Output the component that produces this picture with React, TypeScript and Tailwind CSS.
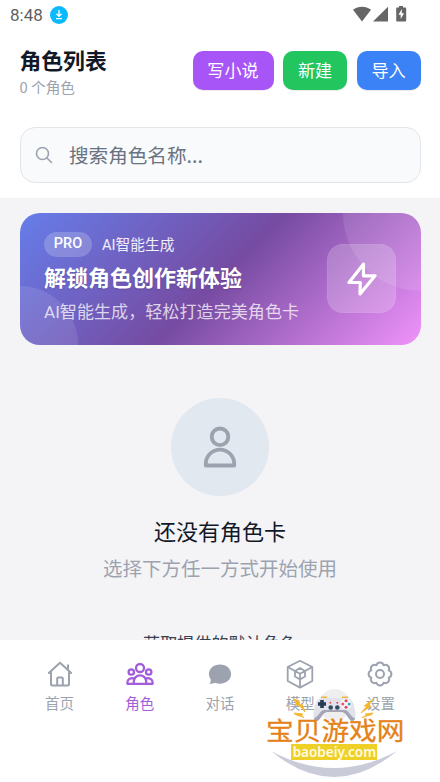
import type { ReactNode } from "react"

const actions = [
  { label: "写小说", className: "w-[81px] bg-[#a855f7]" },
  { label: "新建", className: "w-[64px] bg-[#22c55e]" },
  { label: "导入", className: "w-[64px] bg-[#3b82f6]" },
]

function StatusBar() {
  return (
    <div className="flex h-[30px] items-center pl-[10px] pr-[33px]">
      <span className="font-['Roboto'] text-[17px] leading-none text-[#5f5f5f]">8:48</span>
      <svg className="ml-[7px]" width="18" height="18" viewBox="0 0 18 18">
        <circle cx="9" cy="9" r="9" fill="#0abafc" />
        <path d="M9 4v6M6.500 7.800 9 10.300l2.500-2.500M6 12.700h6" fill="none" stroke="#fff" strokeWidth="1.3" />
      </svg>
      <svg className="ml-auto" width="54" height="18" viewBox="0 0 54 18" fill="#666">
        <path d="M0 3.800C5-.2 13-.2 18 3.800L9 15.500z" />
        <path d="M35 .8v14.700H20z" />
        <path d="M46 1.600V0h4v1.600h2c.8 0 1.200.4 1.200 1.200v11.500c0 .8-.4 1.200-1.200 1.200h-7.600c-.8 0-1.200-.4-1.200-1.200V2.800c0-.8.4-1.200 1.200-1.200z" />
        <path d="m48.800 3-3.300 5.800h2.200v4.200l3.300-5.800h-2.200z" fill="#fff" />
      </svg>
    </div>
  )
}

function Header() {
  return (
    <header className="h-[198px] bg-white">
      <StatusBar />
      <div className="flex h-[97px] items-start justify-between px-[19.500px]">
        <div className="pt-[14px]">
          <h1 className="text-[21.800px] font-bold leading-[32px] text-[#111827]">角色列表</h1>
          <p className="text-[14.700px] leading-[22px] text-[#9ca3af]">0 个角色</p>
        </div>
        <div className="flex gap-[9.500px] pt-[21px]">
          {actions.map((a) => (
            <button
              key={a.label}
              className={`h-[39px] rounded-[10px] pb-[2px] text-[17.100px] text-white shadow-[0_1px_1px_rgba(0,0,0,0.08)] ${a.className}`}
            >
              {a.label}
            </button>
          ))}
        </div>
      </div>
      <div className="mx-[19.500px] flex h-[56px] items-center rounded-[15px] border border-[#e2e5e9] bg-[#f8fafc] pl-[14.500px]">
        <svg width="18" height="18" viewBox="0 0 18 18" fill="none" stroke="#9ca3af" strokeWidth="1.6" strokeLinecap="round">
          <circle cx="7.500" cy="7.500" r="6" />
          <path d="m12 12 4.500 4.500" />
        </svg>
        <span className="ml-[16px] pb-[1px] text-[19.600px] text-[#6b7280]">搜索角色名称...</span>
      </div>
    </header>
  )
}

function ProBanner() {
  return (
    <section className="relative mx-[19.500px] mt-[14.500px] h-[132px] overflow-hidden rounded-[20px] bg-[linear-gradient(135deg,#667eea_0%,#764ba2_50%,#f093fb_100%)]">
      <div className="absolute -right-[78px] -top-[78px] size-[156px] rounded-full bg-white/10" />
      <div className="absolute -bottom-[58.500px] -left-[58.500px] size-[117px] rounded-full bg-white/10" />
      <div className="relative flex h-full items-center justify-between pl-[24.500px] pr-[24.500px]">
        <div className="text-white">
          <div className="flex items-center gap-[10px]">
            <span className="flex h-[25px] w-[48px] items-center justify-center rounded-full bg-white/20 font-['Roboto'] text-[14.500px] font-medium">
              PRO
            </span>
            <span className="text-[14.700px] leading-[25px] text-white/90">
              <span className="font-['Roboto']">AI</span>智能生成
            </span>
          </div>
          <h2 className="mt-[2px] text-[22px] font-bold leading-[32px] [text-shadow:0_1px_2px_rgba(0,0,0,0.15)]">
            解锁角色创作新体验
          </h2>
          <p className="mb-[2px] mt-[6px] text-[17.100px] leading-[25px] text-white/75">
            <span className="font-['Roboto']">AI</span>智能生成，轻松打造完美角色卡
          </p>
        </div>
        <div className="flex size-[69px] shrink-0 items-center justify-center rounded-[16px] border border-white/5 bg-white/20">
          <svg width="30" height="34" viewBox="0 0 30 34" fill="none" stroke="#fff" strokeWidth="3.200" strokeLinejoin="round">
            <path d="M16.500 2 2 20.500h11.300L13 32 28 13.800H16.500z" />
          </svg>
        </div>
      </div>
    </section>
  )
}

function EmptyState() {
  return (
    <section className="flex flex-col items-center pt-[53.500px]">
      <div className="flex size-[98px] items-center justify-center rounded-full bg-[#e2e8f0]">
        <svg width="34" height="42" viewBox="0 0 34 42" fill="none" stroke="#9ca3af" strokeWidth="3.800" strokeLinejoin="round">
          <circle cx="17" cy="10.800" r="8.300" />
          <path d="M2.800 39.500v-1.700a14.200 14.200 0 0 1 28.400 0v1.700z" />
        </svg>
      </div>
      <h3 className="mt-[17px] text-[22px] leading-[34px] text-[#111827]">还没有角色卡</h3>
      <p className="mt-[6px] text-[19.500px] leading-[29px] text-[#9ca3af]">选择下方任一方式开始使用</p>
      <p className="mt-[48px] text-[17.100px] leading-[25px] text-[#374151]">获取提供的默认角色</p>
    </section>
  )
}

function HomeIcon() {
  return (
    <svg width="28" height="28" viewBox="0 0 28 28" fill="none" stroke="#9ca3af" strokeWidth="2" strokeLinecap="round" strokeLinejoin="round">
      <path d="M2.800 13 14 2.700 25.200 13M5 11.500v12.600c0 1 .5 1.500 1.500 1.500h15c1 0 1.500-.5 1.500-1.500V11.500" />
      <path d="M11.200 25v-6.500c0-.7.300-1 1-1h3.600c.7 0 1 .3 1 1V25" />
      <path d="M22 5.200v3.500" />
    </svg>
  )
}

function RoleIcon() {
  return (
    <svg width="28" height="28" viewBox="0 0 28 28" fill="none" stroke="#a35ddb" strokeWidth="2.300" strokeLinejoin="round">
      <circle cx="14" cy="8" r="4" />
      <circle cx="5.300" cy="12" r="2.700" />
      <circle cx="22.700" cy="12" r="2.700" />
      <path d="M7.800 23.800v-2.300a6.200 6.200 0 0 1 12.400 0v2.300z" />
      <path d="M8.300 18.600c-3.200-1.200-6.900.6-6.900 3.800v1.400h6.400M19.700 18.600c3.200-1.200 6.900.6 6.900 3.800v1.400h-6.400" />
    </svg>
  )
}

function ChatIcon() {
  return (
    <svg width="28" height="28" viewBox="0 0 28 28" fill="#9ca3af">
      <path d="M14 4.500c6.400 0 11.100 4.200 11.100 9.600S20.400 23.700 14 23.700c-1.800 0-3.500-.3-5-1-1.600.9-3.500 1.300-5.700 1.100 1-.9 1.500-2.300 1.600-4A9 9 0 0 1 2.900 14.100C2.900 8.700 7.600 4.500 14 4.500z" />
    </svg>
  )
}

function ModelIcon() {
  return (
    <svg width="28" height="30" viewBox="0 0 28 30" fill="none" stroke="#9ca3af" strokeWidth="1.800" strokeLinejoin="round">
      <path d="M14 1.700 26.300 8v14L14 28.600 1.700 22V8z" />
      <path d="m1.700 8 7.300 4M26.300 8 19 12M14 20.500v8M14 14.800v5.700M9 12l5 2.800 5-2.800M14 9l5 3v5.500l-5 3-5-3V12z" />
    </svg>
  )
}

function SettingsIcon() {
  return (
    <svg width="28" height="28" viewBox="-14 -14 28 28" fill="none" stroke="#9ca3af" strokeWidth="2" strokeLinejoin="round">
      <path d="M-3.600-8.700C-2.500-12.300 2.500-12.300 3.600-8.700 6.900-10.500 10.500-6.900 8.700-3.600 12.300-2.500 12.300 2.500 8.700 3.600 10.500 6.900 6.900 10.500 3.600 8.700 2.500 12.300-2.500 12.300-3.600 8.700-6.900 10.500-10.500 6.900-8.700 3.600-12.300 2.500-12.300-2.500-8.700-3.600-10.500-6.900-6.900-10.500-3.600-8.700z" />
      <circle r="4" />
    </svg>
  )
}

function TabItem({ icon, label, active }: { icon: ReactNode; label: string; active?: boolean }) {
  return (
    <div className={`flex flex-1 flex-col items-center text-[14.500px] leading-[22px] ${active ? "text-[#a35ddb]" : "text-[#9ca3af]"}`}>
      <div className="flex h-[30px] items-center">{icon}</div>
      <span className="mt-[3px]">{label}</span>
    </div>
  )
}

function Watermark() {
  return (
    <div className="absolute left-[264px] top-[686px] h-[94px] w-[144px]">
      <svg className="absolute inset-0" width="144" height="94" viewBox="0 0 144 94">
        <path d="M7 65Q70 99 133 65 70 117 7 65z" fill="#c9cbd8" />
        <circle cx="70.500" cy="19" r="16" fill="#efeff0" />
        <path
          d="m30 13 3 7 2-1 6 7-3-8-2 1-1-4zM109 13l-9 7 3 0-6 7 10-7-3 0zM30 27l9 1-2 1 3 2.500-9-3zM109 27l-8 1 2 1-5 2.500 10-3z"
          fill="#f3b52b"
          stroke="#f3b52b"
          strokeWidth="0.8"
        />
        <path d="M57 11.500h6M78 11.500h6" stroke="#efb73b" strokeWidth="2" />
        <path d="M58 12h25c5 0 7 6 8 12 1 5 1 11-3 11-3 0-5-9-9-11H62c-4 2-6 11-9 11-4 0-4-6-3-11 1-6 3-12 8-12z" fill="#e2e2eb" />
        <path d="M50 32c5-1 5-7 10-8h21c5 1 5 7 10 8 0 2-1 3-3 3-3 0-5-8-10-9H63c-5 1-7 9-10 9-2 0-3-1-3-3z" fill="#a4a6b7" />
        <path d="M56.200 14h3.600v2.200H62v3.600h-2.200V22h-3.600v-2.200H54v-3.600h2.200z" fill="#263d54" />
        <circle cx="82" cy="18" r="5.500" fill="#f7f7fa" />
        <g fill="#ee4354">
          <circle cx="82" cy="14.800" r="1.500" />
          <circle cx="82" cy="21.200" r="1.500" />
          <circle cx="66.300" cy="16.700" r="1" />
          <circle cx="73.300" cy="16.700" r="1" />
        </g>
        <circle cx="78.800" cy="18" r="1.500" fill="#e7566d" />
        <circle cx="85.200" cy="18" r="1.500" fill="#39a9b8" />
        <circle cx="66.700" cy="21.500" r="2.300" fill="#334b62" />
        <circle cx="73.300" cy="21.500" r="2.300" fill="#334b62" />
      </svg>
      <div className="absolute left-[2px] top-[30px] h-[28px] origin-top scale-y-[0.92] whitespace-nowrap text-[27.700px] leading-[28px] text-[#e58217] [-webkit-text-stroke:0.3px_#e58217]">
        宝贝游戏网
      </div>
      <div className="absolute left-[27px] top-[58px] flex h-[16px] w-[86px] items-center justify-center bg-[#efd027]">
        <span className="-mt-[2px] scale-x-[0.9] font-['Noto_Sans'] text-[15px] font-semibold leading-[14px] text-[#fffbe0]">baobeiy.com</span>
      </div>
    </div>
  )
}

export default function App() {
  return (
    <div className="relative flex h-[782px] w-[440px] flex-col overflow-hidden bg-[#f4f4f7] font-['Noto_Sans_CJK_SC',sans-serif]">
      <Header />
      <main className="h-[442px] overflow-hidden">
        <ProBanner />
        <EmptyState />
      </main>
      <nav className="flex flex-1 bg-white px-[19.500px] pt-[19px]">
        <TabItem icon={<HomeIcon />} label="首页" />
        <TabItem icon={<RoleIcon />} label="角色" active />
        <TabItem icon={<ChatIcon />} label="对话" />
        <TabItem icon={<ModelIcon />} label="模型" />
        <TabItem icon={<SettingsIcon />} label="设置" />
      </nav>
      <Watermark />
    </div>
  )
}
